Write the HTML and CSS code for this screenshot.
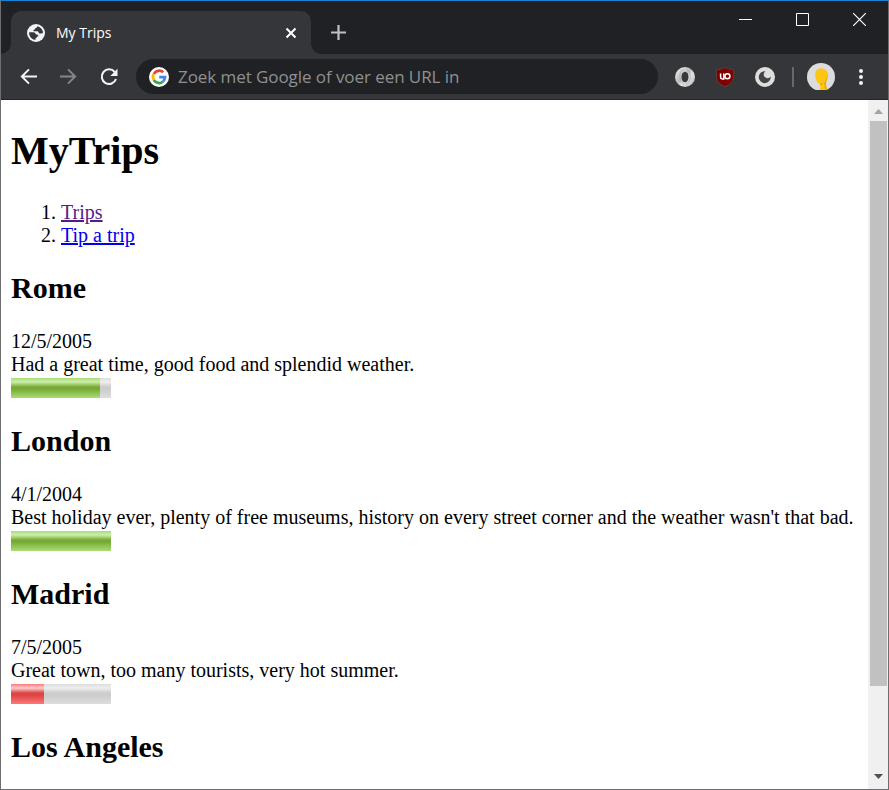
FILE: index.html
```html
<!DOCTYPE html>
<html lang="nl">
<head>
<meta charset="utf-8">
<title>My Trips</title>
<link rel="stylesheet" href="styles.css">
</head>
<body>
<div class="window">
  <header class="tabstrip">
    <div class="tab">
      <svg class="globe" viewBox="0 0 18 18" width="18" height="18"><circle cx="9" cy="9" r="9" fill="#f1f3f4"/><path d="M10 2.200c.2 1-.3 1.600-1.200 1.900-.8.300-.7 1.500-1.700 1.700-.8.200-.9 1-.3 1.500h3.700c1.200 0 .9 1.700 1.800 2.100 1 .4 2-.5 3.600-.2a7 7 0 0 0-5.900-7zM2.100 8.300a7 7 0 0 0 6.400 7.600v-1.600c1.200 0 1.200-1.800 2.300-2 .9-.2.700-1.500-.3-1.600-1.300-.1-1.600-.3-2.100-1.200C7.700 8.200 6.500 8.300 5 8.300z" fill="#35363a"/></svg>
      <span class="tab-title">My Trips</span>
      <svg class="tab-close" viewBox="0 0 12 12" width="12" height="12"><path d="M1.500 1.500l9 9M10.500 1.500l-9 9" stroke="#fff" stroke-width="2"/></svg>
    </div>
    <svg class="new-tab" viewBox="0 0 16 16" width="16" height="16"><path d="M8.500 1v15M1 8.500h15" stroke="#bdc1c6" stroke-width="2.200"/></svg>
    <div class="controls">
      <svg viewBox="0 0 13 13" width="13" height="13"><path d="M0 6.500h13" stroke="#fff"/></svg>
      <svg viewBox="0 0 13 13" width="13" height="13"><path d="M.5.5h12v12H.5z" fill="none" stroke="#fff"/></svg>
      <svg viewBox="0 0 13 13" width="13" height="13"><path d="M0 0l13 13M13 0L0 13" stroke="#fff" stroke-width="1.200"/></svg>
    </div>
  </header>
  <nav class="toolbar">
    <svg class="back" viewBox="0 0 18 18" width="17" height="17"><path d="M18 9H2M9.500 1.500L2 9l7.500 7.500" fill="none" stroke="#f1f3f4" stroke-width="2.100"/></svg>
    <svg class="forward" viewBox="0 0 18 18" width="17" height="17"><path d="M0 9h16M8.500 1.500L16 9l-7.500 7.500" fill="none" stroke="#85868a" stroke-width="2.100"/></svg>
    <svg class="reload" viewBox="0 0 18 18" width="18" height="18"><path d="M14.700 4A7.300 7.300 0 1 0 16 11" fill="none" stroke="#f1f3f4" stroke-width="2"/><path d="M17.500.8v7.200h-7.200z" fill="#f1f3f4"/></svg>
    <div class="omnibox">
      <svg viewBox="0 0 20 20" width="20" height="20"><circle cx="10" cy="10" r="10" fill="#fff"/><g fill="none" stroke-width="2.700"><path d="M14.200 5.300A6 6 0 0 0 4.800 7" stroke="#ea4335"/><path d="M4.800 7a6 6 0 0 0 0 6" stroke="#fbbc05"/><path d="M4.800 13a6 6 0 0 0 9.200 1.500" stroke="#34a853"/><path d="M14 14.500A6 6 0 0 0 16 10.200H10.200" stroke="#4285f4"/></g></svg>
      <span>Zoek met Google of voer een URL in</span>
    </div>
    <svg class="ext-ring" viewBox="0 0 20 20" width="20" height="20"><defs><linearGradient id="ring" x1="0" y1="0" x2="1" y2="1"><stop offset="0" stop-color="#f4f4f4"/><stop offset=".45" stop-color="#bbb"/><stop offset=".6" stop-color="#e2e2e2"/><stop offset="1" stop-color="#b4b4b4"/></linearGradient></defs><circle cx="10" cy="10" r="10" fill="url(#ring)"/><path d="M8 2.500C3 6 4 14 9 17.500M12 2.500c5 3.500 4 11.500-1 15" fill="none" stroke="#aaa" stroke-width=".8"/><ellipse cx="10" cy="10" rx="3.500" ry="5.200" fill="#37383b"/></svg>
    <svg class="ext-shield" viewBox="0 0 18 20" width="18" height="20"><path d="M9 .3C11 1.700 14 2.600 17.600 2.800V10c0 4.700-3.600 7.600-8.600 9.700C4 17.600.4 14.700.4 10V2.800C4 2.600 7 1.700 9 .3z" fill="#800000" stroke="#5d4548" stroke-width=".8"/><path d="M4.600 6.500v3.800c0 1.200.6 1.700 1.700 1.700h1.500V6.500" fill="none" stroke="#fff" stroke-width="1.500"/><circle cx="11.400" cy="9.300" r="2.500" fill="none" stroke="#fff" stroke-width="1.500"/></svg>
    <svg class="ext-moon" viewBox="0 0 20 20" width="20" height="20"><circle cx="10" cy="10" r="10" fill="#dedede"/><path d="M10.500 4.200a3.800 3.800 0 1 0 5.200 5.300A6 6 0 1 1 10.500 4.200z" fill="#444"/></svg>
    <i class="divider"></i>
    <svg class="avatar" viewBox="0 0 28 27" width="28" height="27"><circle cx="14" cy="14" r="14" fill="#dcdcdc"/><path d="M8.300 11.500C8.300 7.500 10.500 5.600 14.500 5.600s6.100 2.200 6.100 6c0 3-.7 5.500-2.400 7.400V27h-5.700c1-1.800 1-4.500.4-6.300-3.600-1.200-4.600-5-4.600-9.200z" fill="#fcc612"/><path d="M19.800 8.500c.9 4 .3 8-2.500 10.700 0 3 .2 5 1.200 7.800h2c-1.300-3-1.600-5.500-1.400-8 2-3 2-7.500.7-10.500zM12.900 20.700c1.300.2 2.400-.2 3.300-1-.6 1.800-1.700 2.600-3.100 2.700z" fill="#e5aa08"/></svg>
    <svg class="menu" viewBox="0 0 4 16" width="4" height="16"><g fill="#f1f3f4"><circle cx="2" cy="2" r="2"/><circle cx="2" cy="8" r="2"/><circle cx="2" cy="14" r="2"/></g></svg>
  </nav>
  <div class="viewport">
    <main>
      <h1>MyTrips</h1>
      <ol>
        <li><a class="visited">Trips</a></li>
        <li><a>Tip a trip</a></li>
      </ol>
      <section>
        <h2>Rome</h2>
        <p>12/5/2005</p>
        <p>Had a great time, good food and splendid weather.</p>
        <div class="meter"><div class="good" style="width:89%"></div></div>
      </section>
      <section>
        <h2>London</h2>
        <p>4/1/2004</p>
        <p>Best holiday ever, plenty of free museums, history on every street corner and the weather wasn't that bad.</p>
        <div class="meter"><div class="good" style="width:100%"></div></div>
      </section>
      <section>
        <h2>Madrid</h2>
        <p>7/5/2005</p>
        <p>Great town, too many tourists, very hot summer.</p>
        <div class="meter"><div class="bad" style="width:33%"></div></div>
      </section>
      <section>
        <h2>Los Angeles</h2>
      </section>
    </main>
    <aside class="scrollbar">
      <svg viewBox="0 0 9 5" width="9" height="5"><path d="M0 5L4.500 0 9 5z" fill="#a3a3a3"/></svg>
      <div class="thumb"></div>
      <svg class="down" viewBox="0 0 9 5" width="9" height="5"><path d="M0 0h9L4.500 5z" fill="#505050"/></svg>
    </aside>
  </div>
</div>
</body>
</html>
```
FILE: styles.css
```css
* { box-sizing: border-box; }
body { margin: 0; }
svg { display: block; flex: none; }

.window {
  width: 889px;
  height: 790px;
  display: flex;
  flex-direction: column;
  overflow: hidden;
  background: #fff;
  border: 1px solid #6e6e70;
  border-top-color: #1883d7;
  font-family: "Open Sans", "Noto Sans", sans-serif;
}

.tabstrip {
  height: 53px;
  flex: none;
  display: flex;
  align-items: flex-start;
  background: #202124;
}
.tab {
  position: relative;
  width: 300px;
  height: 43px;
  margin: 10px 0 0 10px;
  padding: 0 14px 0 16px;
  display: flex;
  align-items: center;
  background: #35363a;
  border-radius: 10px 10px 0 0;
}
.tab::before,
.tab::after {
  content: "";
  position: absolute;
  bottom: 0;
  width: 10px;
  height: 10px;
}
.tab::before { left: -10px; background: radial-gradient(circle at 0 0, transparent 9.5px, #35363a 10px); }
.tab::after { right: -10px; background: radial-gradient(circle at 100% 0, transparent 9.5px, #35363a 10px); }
.tab-title {
  margin-left: 11px;
  padding-bottom: 1px;
  color: #fff;
  font-size: 14px;
  white-space: nowrap;
}
.tab-close { margin-left: auto; }
.new-tab { margin: 23px 0 0 19px; }
.controls {
  display: flex;
  gap: 44px;
  margin: 12px 22px 0 auto;
}

.toolbar {
  height: 46px;
  flex: none;
  display: flex;
  align-items: center;
  background: #35363a;
  border-bottom: 1px solid #252629;
}
.back { margin-left: 19px; }
.forward { margin-left: 23px; }
.reload { margin-left: 23px; }
.omnibox {
  width: 522px;
  height: 35px;
  flex: none;
  margin-left: 18px;
  padding-left: 13px;
  display: flex;
  align-items: center;
  gap: 9px;
  border-radius: 18px;
  background: #202124;
  color: #8f9092;
  font-size: 17px;
  letter-spacing: -0.07px;
  white-space: nowrap;
}
.ext-ring { margin-left: 17px; }
.ext-shield { margin-left: 21px; }
.ext-moon { margin-left: 21px; }
.divider { width: 2px; height: 20px; margin-left: 17px; background: #67686b; }
.avatar { margin-left: 13px; }
.menu { margin-left: 24px; }

.viewport {
  flex: 1;
  min-height: 0;
  display: flex;
}
main {
  flex: 1;
  padding: 0 10px;
  color: #000;
  font: 20px/23px "Liberation Serif", "Times New Roman", serif;
}
h1 { margin: 28px 0 27px; font-size: 40px; line-height: 46px; }
ol { margin: 0; padding-left: 50px; }
a { color: #00e; text-decoration: underline; }
a.visited { color: #551a8b; }
h2 { margin: 24px 0 25px; font-size: 30px; line-height: 34px; }
section { height: 153px; display: flow-root; }
p { margin: 0; white-space: nowrap; }
.meter {
  width: 100px;
  height: 20px;
  margin-top: 2px;
  background: linear-gradient(#ddd, #eee 20%, #ccc 45%, #ccc 55%, #ddd);
}
.meter div { height: 100%; }
.good { background: linear-gradient(#ad7, #cea 20%, #7a3 45%, #7a3 55%, #ad7); }
.bad { background: linear-gradient(#f77, #fcc 20%, #d44 45%, #d44 55%, #f77); }

.scrollbar {
  width: 20px;
  flex: none;
  padding-top: 9px;
  display: flex;
  flex-direction: column;
  align-items: center;
  background: #f0f0f0;
}
.thumb { width: 17px; height: 565px; margin: 7px 0 0 1px; background: #c1c1c1; }
.down { margin: auto 0 10px; }
```
